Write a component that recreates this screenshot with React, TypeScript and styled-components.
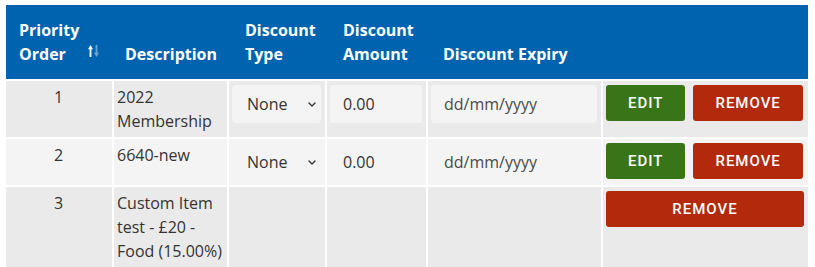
import React from "react";
import styled, { createGlobalStyle } from "styled-components";

const GlobalStyle = createGlobalStyle`
  body {
    margin: 0;
    background: #ffffff;
    font-family: "Open Sans", "Liberation Sans", sans-serif;
  }
`;

const Wrapper = styled.div`
  padding: 5px 7px 0 6px;
`;

const Table = styled.table`
  width: 802px;
  table-layout: fixed;
  border-collapse: separate;
  border-spacing: 0;
  font-size: 16px;
  line-height: 24px;
  color: #333333;
`;

const HeadCell = styled.th<{ $pad: number }>`
  background: #0063af;
  color: #ffffff;
  font-weight: 700;
  text-align: left;
  vertical-align: bottom;
  padding: 13px 13px 13px ${(p) => p.$pad}px;
`;

const SortHead = styled.div`
  display: flex;
  align-items: flex-end;
  justify-content: space-between;
`;

const SortIcon = styled.svg`
  width: 11px;
  height: 12px;
  margin-bottom: 9px;
  flex-shrink: 0;
`;

const Row = styled.tr<{ $alt?: boolean }>`
  background: ${(p) => (p.$alt ? "#f4f4f4" : "#eaeaea")};
`;

const Cell = styled.td<{ $center?: boolean }>`
  vertical-align: top;
  padding: 4px 4px 4px 3px;
  border-top: 2px solid #ffffff;
  text-align: ${(p) => (p.$center ? "center" : "left")};

  & + & {
    border-left: 2px solid #ffffff;
  }
`;

const SelectWrap = styled.div`
  position: relative;
`;

const Select = styled.select`
  appearance: none;
  display: block;
  width: 100%;
  height: 38px;
  border: none;
  border-radius: 4px;
  background: #f4f4f4;
  padding: 0 0 0 15px;
  font-family: "Open Sans", "Liberation Sans", sans-serif;
  font-size: 16px;
  color: #333333;
  outline: none;
`;

const Chevron = styled.svg`
  position: absolute;
  right: 5px;
  top: 17px;
  width: 8px;
  height: 5px;
  pointer-events: none;
`;

const Field = styled.input`
  display: block;
  width: 100%;
  box-sizing: border-box;
  height: 38px;
  border: none;
  border-radius: 4px;
  background: #f4f4f4;
  padding: 0 12px 0 13px;
  font-family: "Open Sans", "Liberation Sans", sans-serif;
  font-size: 16px;
  color: #333333;
  outline: none;

  &::placeholder {
    color: #4a4a4a;
  }
`;

const Actions = styled.div`
  display: flex;
  gap: 8px;
`;

const Button = styled.button<{ $tone: "green" | "red"; $full?: boolean }>`
  height: 36px;
  padding: 0 22px;
  border: none;
  border-radius: 3px;
  cursor: pointer;
  background: ${(p) => (p.$tone === "green" ? "#377518" : "#b2290b")};
  color: #ffffff;
  font-family: Roboto, "Liberation Sans", sans-serif;
  font-weight: 500;
  font-size: 15px;
  letter-spacing: 1px;
  text-transform: uppercase;
  width: ${(p) => (p.$full ? "100%" : "auto")};
  flex: ${(p) => (p.$full ? "1" : "0 0 auto")};
`;

const widths = [106, 115, 98, 101, 175, 207];

type Item = {
  order: number;
  description: string;
  editable: boolean;
};

const items: Item[] = [
  { order: 1, description: "2022 Membership", editable: true },
  { order: 2, description: "6640-new", editable: true },
  { order: 3, description: "Custom Item test - £20 - Food (15.00%)", editable: false },
];

const App: React.FC = () => {
  return (
    <Wrapper>
      <GlobalStyle />
      <Table>
        <colgroup>
          {widths.map((w, i) => (
            <col key={i} style={{ width: w }} />
          ))}
        </colgroup>
        <thead>
          <tr>
            <HeadCell $pad={13}>
              <SortHead>
                <span>Priority Order</span>
                <SortIcon viewBox="0 0 11 12">
                  <rect x="1.6" y="3" width="1.8" height="9" fill="#ffffff" />
                  <path d="M0 4.2L2.5 0L5 4.2Z" fill="#ffffff" />
                  <rect x="7.6" y="0" width="1.8" height="9" fill="#6fa3d1" />
                  <path d="M6 7.8L8.5 12L11 7.8Z" fill="#6fa3d1" />
                </SortIcon>
              </SortHead>
            </HeadCell>
            <HeadCell $pad={13}>Description</HeadCell>
            <HeadCell $pad={18}>Discount Type</HeadCell>
            <HeadCell $pad={18}>Discount Amount</HeadCell>
            <HeadCell $pad={17}>Discount Expiry</HeadCell>
            <HeadCell $pad={17}></HeadCell>
          </tr>
        </thead>
        <tbody>
          {items.map((item) => (
            <Row key={item.order} $alt={item.order % 2 === 0}>
              <Cell $center>{item.order}</Cell>
              <Cell>{item.description}</Cell>
              <Cell>
                {item.editable && (
                  <SelectWrap>
                    <Select defaultValue="none">
                      <option value="none">None</option>
                      <option value="percent">Percent</option>
                      <option value="fixed">Fixed</option>
                    </Select>
                    <Chevron viewBox="0 0 8 5" fill="none">
                      <path d="M1 1L4 4L7 1" stroke="#333333" strokeWidth="1.4" strokeLinecap="round" strokeLinejoin="round" />
                    </Chevron>
                  </SelectWrap>
                )}
              </Cell>
              <Cell>{item.editable && <Field type="text" defaultValue="0.00" />}</Cell>
              <Cell>{item.editable && <Field type="text" placeholder="dd/mm/yyyy" />}</Cell>
              <Cell>
                <Actions>
                  {item.editable && <Button $tone="green">Edit</Button>}
                  <Button $tone="red" $full={!item.editable}>
                    Remove
                  </Button>
                </Actions>
              </Cell>
            </Row>
          ))}
        </tbody>
      </Table>
    </Wrapper>
  );
};

export default App;
